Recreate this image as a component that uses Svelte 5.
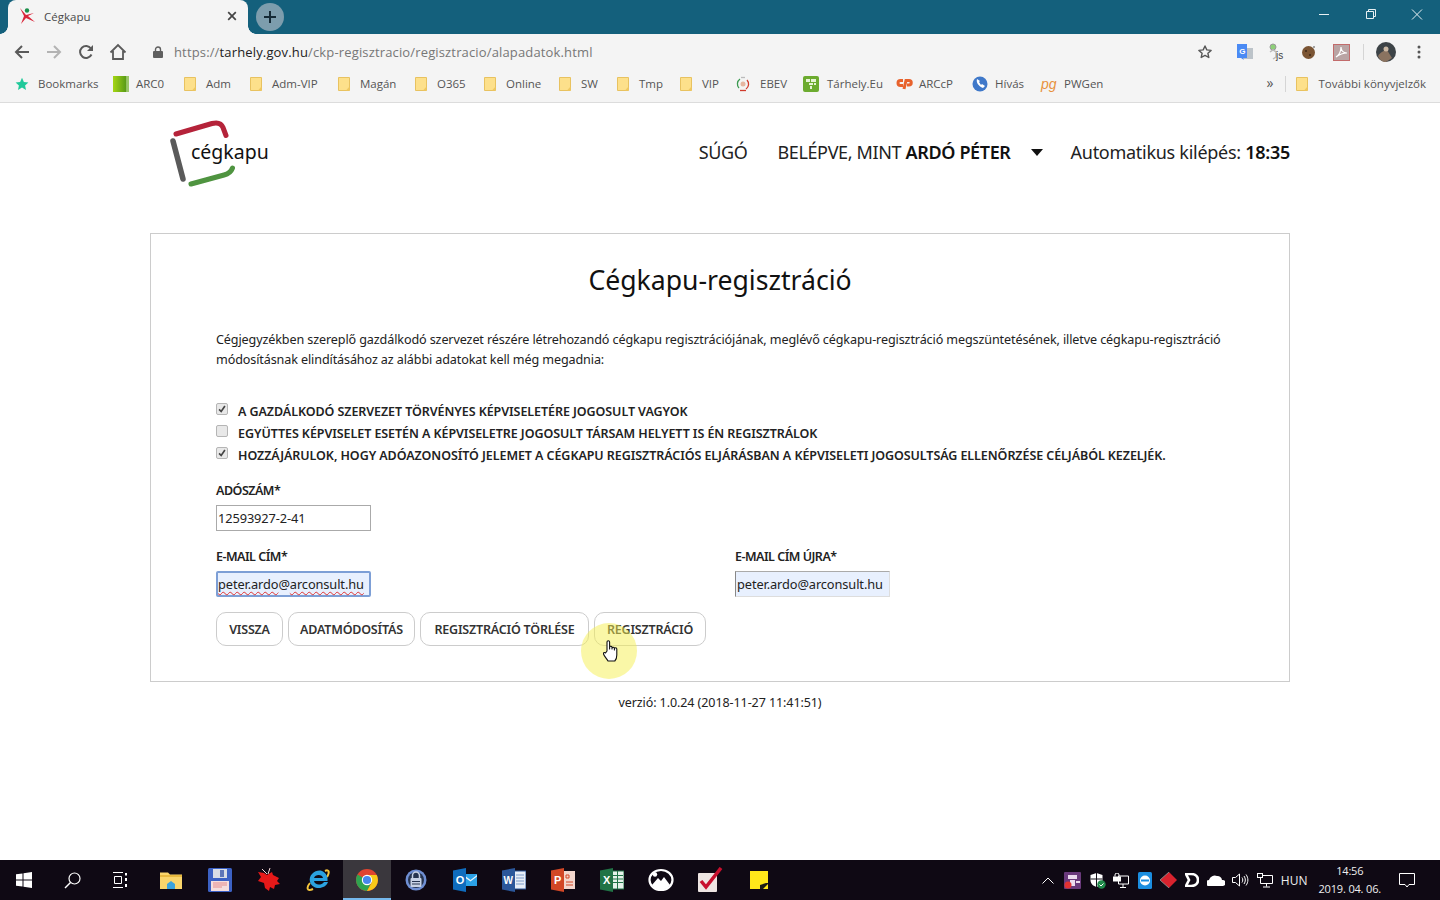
<script>
  const bookmarks = [
    { label: 'Bookmarks', w: 98, icon: 'star' },
    { label: 'ARC0', w: 71, icon: 'green' },
    { label: 'Adm', w: 66, icon: 'folder' },
    { label: 'Adm-VIP', w: 88, icon: 'folder' },
    { label: 'Magán', w: 77, icon: 'folder' },
    { label: 'O365', w: 69, icon: 'folder' },
    { label: 'Online', w: 75, icon: 'folder' },
    { label: 'SW', w: 58, icon: 'folder' },
    { label: 'Tmp', w: 63, icon: 'folder' },
    { label: 'VIP', w: 56, icon: 'folder' },
    { label: 'EBEV', w: 67, icon: 'ebev' },
    { label: 'Tárhely.Eu', w: 93, icon: 'tarhely' },
    { label: 'ARCcP', w: 76, icon: 'cp' },
    { label: 'Hívás', w: 69, icon: 'hivas' },
    { label: 'PWGen', w: 70, icon: 'pg' }
  ];
  const checks = [
    { text: 'A GAZDÁLKODÓ SZERVEZET TÖRVÉNYES KÉPVISELETÉRE JOGOSULT VAGYOK', on: true },
    { text: 'EGYÜTTES KÉPVISELET ESETÉN A KÉPVISELETRE JOGOSULT TÁRSAM HELYETT IS ÉN REGISZTRÁLOK', on: false },
    { text: 'HOZZÁJÁRULOK, HOGY ADÓAZONOSÍTÓ JELEMET A CÉGKAPU REGISZTRÁCIÓS ELJÁRÁSBAN A KÉPVISELETI JOGOSULTSÁG ELLENŐRZÉSE CÉLJÁBÓL KEZELJÉK.', on: true }
  ];
  const buttons = [
    { t: 'VISSZA', w: 67 },
    { t: 'ADATMÓDOSÍTÁS', w: 127 },
    { t: 'REGISZTRÁCIÓ TÖRLÉSE', w: 169 },
    { t: 'REGISZTRÁCIÓ', w: 112 }
  ];
</script>

{#snippet folder()}
  <svg width="12" height="14" viewBox="0 0 12 14"><path d="M.5.5h11v13H.5z" fill="#fde08b" stroke="#e8c260"/><path d="M8 13.5l3.5-4v4z" fill="#f0c860"/></svg>
{/snippet}

<div class="screen">
  <header class="tabstrip">
    <div class="tab">
      <svg class="favicon" width="18" height="18" viewBox="0 0 18 18">
        <circle cx="8" cy="3.5" r="2.2" fill="#1b8f4a"/>
        <path d="M1 1l4 8-3 8 5-6 9 4-7-6 6-3-8 2z" fill="#d9263a"/>
      </svg>
      <span class="tab-title">Cégkapu</span>
      <svg class="tab-close" width="10" height="10" viewBox="0 0 10 10"><path d="M1.2 1.2l7.6 7.6M8.800 1.200L1.200 8.800" stroke="#444" stroke-width="1.700"/></svg>
    </div>
    <div class="newtab">
      <svg width="14" height="14" viewBox="0 0 14 14"><path d="M7 1v12M1 7h12" stroke="#152a36" stroke-width="2"/></svg>
    </div>
    <div class="winctl">
      <svg width="46" height="30" viewBox="0 0 46 30"><path d="M18 14.500h10" stroke="#e8f0f3"/></svg>
      <svg width="46" height="30" viewBox="0 0 46 30"><path d="M18.500 11.500h7v7h-7zM20.500 11.500v-2h7v7h-2" fill="none" stroke="#e8f0f3"/></svg>
      <svg width="46" height="30" viewBox="0 0 46 30"><path d="M18 9.500l10 10M28 9.500l-10 10" stroke="#e8f0f3"/></svg>
    </div>
  </header>

  <div class="toolbar">
    <svg class="tool" width="16" height="16" viewBox="0 0 16 16"><path d="M15 8H2M8 2L2 8l6 6" fill="none" stroke="#5a5a5a" stroke-width="2"/></svg>
    <svg class="tool" width="16" height="16" viewBox="0 0 16 16"><path d="M1 8h13M8 2l6 6-6 6" fill="none" stroke="#b3b3b3" stroke-width="2"/></svg>
    <svg class="tool" width="16" height="16" viewBox="0 0 16 16"><path d="M13.500 10.500A6 6 0 1 1 13 4.500" fill="none" stroke="#5a5a5a" stroke-width="2"/><path d="M15 1v6H9z" fill="#5a5a5a"/></svg>
    <svg class="tool" width="18" height="18" viewBox="0 0 18 18"><path d="M1.500 9.500L9 2l7.500 7.500M4 8v8h10V8" fill="none" stroke="#5a5a5a" stroke-width="1.800"/></svg>
    <div class="omnibox">
      <svg width="10" height="12" viewBox="0 0 10 12"><rect y="5" width="10" height="7" rx="1" fill="#5f5f5f"/><path d="M2.500 5V3.500a2.500 2.500 0 0 1 5 0V5" fill="none" stroke="#5f5f5f" stroke-width="1.400"/></svg>
      <span class="url"><span class="dim">https://</span><span class="host">tarhely.gov.hu</span><span class="dim">/ckp-regisztracio/regisztracio/alapadatok.html</span></span>
    </div>
    <div class="exts">
      <svg width="14" height="14" viewBox="0 0 14 14"><path d="M7 1l1.800 3.900 4.300.5-3.200 2.900.9 4.200L7 10.400l-3.800 2.100.9-4.200L.9 5.400l4.300-.5z" fill="none" stroke="#555" stroke-width="1.400" stroke-linejoin="round"/></svg>
      <svg class="ext-g" width="18" height="18" viewBox="0 0 18 18"><rect x="6" y="5" width="11" height="11" fill="#bcc3c9"/><path d="M1 1h10v14H7l1 2-3-2H1z" fill="#4a8af4"/><text x="3.300" y="11" font-size="8" font-weight="700" fill="#fff" font-family="Liberation Sans">G</text></svg>
      <svg class="ext-js" width="20" height="18" viewBox="0 0 20 18"><circle cx="5" cy="4" r="3" fill="#8dcf78" stroke="#999"/><path d="M2 9l3-2 3 2v5l-3 2" fill="none" stroke="#bbb" stroke-width="1.500"/><text x="8" y="16" font-size="10" fill="#444" font-family="Liberation Sans">js</text></svg>
      <svg class="ext-c" width="16" height="16" viewBox="0 0 16 16"><circle cx="7.500" cy="8.500" r="6.500" fill="#7a5433"/><circle cx="5" cy="7" r="1" fill="#3c2717"/><circle cx="9" cy="11" r="1" fill="#3c2717"/><circle cx="13" cy="3" r="1" fill="#888"/></svg>
      <svg class="ext-p" width="17" height="17" viewBox="0 0 17 17"><rect x=".5" y=".5" width="16" height="16" fill="#b9a4a4" stroke="#c26b6b"/><path d="M3 13c3-2 5-6 5-10 0 4 3 6 6 6-4 0-7 1-11 4z" fill="none" stroke="#fff" stroke-width="1.200"/></svg>
      <span class="sep"></span>
      <svg class="avatar" width="20" height="20" viewBox="0 0 20 20"><circle cx="10" cy="10" r="10" fill="#3d4347"/><path d="M2 14c3-5 8-6 9-6l5 8-6 4c-4 0-6-2-8-6z" fill="#8a7360"/><circle cx="10" cy="7" r="2.500" fill="#ccb9a5"/></svg>
      <svg class="more" width="4" height="14" viewBox="0 0 4 14"><circle cx="2" cy="2" r="1.500" fill="#555"/><circle cx="2" cy="7" r="1.500" fill="#555"/><circle cx="2" cy="12" r="1.500" fill="#555"/></svg>
    </div>
  </div>

  <nav class="bookmarks">
    {#each bookmarks as b}
      <div class="bm" style="width:{b.w}px">
        <span class="bm-icon" class:tight={b.icon === 'folder'} class:wide={b.icon === 'ebev' || b.icon === 'tarhely'}>
          {#if b.icon === 'star'}
            <svg width="14" height="14" viewBox="0 0 14 14"><path d="M7 .8l1.900 4.100 4.500.5-3.300 3 .9 4.500L7 10.600l-4 2.300.9-4.500-3.300-3 4.500-.5z" fill="#1fc99a"/></svg>
          {:else if b.icon === 'green'}
            <svg width="16" height="16" viewBox="0 0 16 16"><defs><linearGradient id="gr" x1="0" x2="1"><stop offset="0" stop-color="#a5d613"/><stop offset=".8" stop-color="#5a9c16"/><stop offset=".85" stop-color="#9bc76a"/></linearGradient></defs><rect width="16" height="16" fill="url(#gr)"/></svg>
          {:else if b.icon === 'folder'}
            {@render folder()}
          {:else if b.icon === 'ebev'}
            <svg width="14" height="16" viewBox="0 0 14 16"><path d="M3 12a6 6 0 0 1 1-9" fill="none" stroke="#3a9a50" stroke-width="1.300"/><path d="M11 4a6 6 0 0 1-1 9" fill="none" stroke="#d03a2c" stroke-width="1.300"/><circle cx="7" cy="8" r="2.500" fill="#e6b5a0"/><path d="M4 14.500h6" stroke="#d03a2c" stroke-width="1.300"/><path d="M5 1.500h4" stroke="#bbb" stroke-width="1.300"/></svg>
          {:else if b.icon === 'tarhely'}
            <svg width="16" height="16" viewBox="0 0 16 16"><rect width="16" height="16" rx="2" fill="#6cab2f"/><path d="M3 3h4v3H3zM8 3h5v3H8zM6 7h4v2H6zM7 10h2v3H7zM11 7h2v2h-2z" fill="#e6f3d5"/></svg>
          {:else if b.icon === 'cp'}
            <svg width="17" height="13" viewBox="0 0 17 13"><path d="M7 3.500H4.500a2.500 2.500 0 0 0 0 5H7" fill="none" stroke="#e8622c" stroke-width="3"/><path d="M8 12l2-8.500h3a2.200 2.200 0 0 1 0 4.500h-2" fill="none" stroke="#e8622c" stroke-width="3"/></svg>
          {:else if b.icon === 'hivas'}
            <svg width="16" height="16" viewBox="0 0 16 16"><circle cx="8" cy="8" r="7.500" fill="#3f78c9"/><path d="M5 3c-1 3 1 7 6 9l2-2-3-2-1 1-2-3 1-1z" fill="#fff"/></svg>
          {:else}
            <span class="pg">pg</span>
          {/if}
        </span>
        <span>{b.label}</span>
      </div>
    {/each}
    <div class="bm-right">
      <span class="chev">»</span>
      <span class="sep2"></span>
      {@render folder()}
      <span>További könyvjelzők</span>
    </div>
  </nav>

  <main class="page">
    <div class="topbar">
      <div class="logo">
        <svg width="70" height="70" viewBox="0 0 70 70">
          <path d="M8 16L44 5.500c5-1.300 9-1 11 4l3 8" fill="none" stroke="#b5233a" stroke-width="5" stroke-linecap="round"/>
          <path d="M5 23l10 38" fill="none" stroke="#5a5a5a" stroke-width="5.500" stroke-linecap="round"/>
          <path d="M23 66l33-9c4-1 7-3 8.500-7" fill="none" stroke="#4f9440" stroke-width="5" stroke-linecap="round"/>
        </svg>
        <span class="logo-text">cégkapu</span>
      </div>
      <div class="menu">
        <span class="m-help">SÚGÓ</span>
        <span class="m-user">BELÉPVE, MINT <b>ARDÓ PÉTER</b></span>
        <span class="caret"></span>
        <span class="m-time">Automatikus kilépés: <b>18:35</b></span>
      </div>
    </div>

    <section class="card">
      <h1>Cégkapu-regisztráció</h1>
      <p>Cégjegyzékben szereplő gazdálkodó szervezet részére létrehozandó cégkapu regisztrációjának, meglévő cégkapu-regisztráció megszüntetésének, illetve cégkapu-regisztráció módosításnak elindításához az alábbi adatokat kell még megadnia:</p>

      <div class="checks">
        {#each checks as c}
          <label class="check">
            <span class="box">
              {#if c.on}
                <svg width="12" height="12" viewBox="0 0 12 12"><path d="M2.500 6.500l2.500 2.500 4.500-6.500" fill="none" stroke="#444" stroke-width="2"/></svg>
              {/if}
            </span>
            <span>{c.text}</span>
          </label>
        {/each}
      </div>

      <div class="field tax">
        <span class="lab">ADÓSZÁM*</span>
        <div class="input plain">12593927-2-41</div>
      </div>

      <div class="emails">
        <div class="field">
          <span class="lab">E-MAIL CÍM*</span>
          <div class="input focus"><span class="sq">peter.ardo</span>@<span class="sq">arconsult.hu</span></div>
        </div>
        <div class="field">
          <span class="lab">E-MAIL CÍM ÚJRA*</span>
          <div class="input auto">peter.ardo@arconsult.hu</div>
        </div>
      </div>

      <div class="buttons">
        {#each buttons as b}
          <span class="btn" style="width:{b.w}px">{b.t}</span>
        {/each}
      </div>

      <div class="halo"></div>
      <svg class="hand" width="16" height="24" viewBox="0 0 16 24">
        <path d="M4 12V3a1.300 1.300 0 0 1 2.600 0v7-2a1.300 1.300 0 0 1 2.400 0v2-1a1.300 1.300 0 0 1 2.400 0v2-1a1.200 1.200 0 0 1 2.400 0v6c0 3-1 5-2 6H5c-1-2-4-5-4.500-7-.2-1.500 1-2 2-1z" fill="#fff" stroke="#111" stroke-width="1.100" stroke-linejoin="round"/>
      </svg>
    </section>

    <div class="version">verzió: 1.0.24 (2018-11-27 11:41:51)</div>
  </main>

  <footer class="taskbar">
    <div class="tb-apps">
      <span class="tb s">
        <svg width="16" height="16" viewBox="0 0 16 16"><path d="M0 2.300L6.500 1.400v6.200H0zM7.500 1.300L16 0v7.600H7.500zM0 8.400h6.500v6.200L0 13.700zM7.500 8.400H16V16l-8.500-1.300z" fill="#fff"/></svg>
      </span>
      <span class="tb s">
        <svg width="17" height="17" viewBox="0 0 17 17"><circle cx="10.500" cy="6.500" r="5.500" fill="none" stroke="#fff" stroke-width="1.200"/><path d="M6.500 10.500L1 16" stroke="#fff" stroke-width="1.400"/></svg>
      </span>
      <span class="tb s">
        <svg width="16" height="16" viewBox="0 0 16 16"><path d="M1 .5h10M1 15.500h10M2.500 4.500h7v7h-7z" fill="none" stroke="#fff"/><path d="M13 1h2v2.500h-2zM13 6h2v3h-2zM13 12h2v3h-2z" fill="#fff"/></svg>
      </span>
      <span class="tb gapl">
        <svg width="22" height="18" viewBox="0 0 22 18"><path d="M0 1.500h8l2 2h12V18H0z" fill="#f9d56b"/><path d="M0 4h22v2H0z" fill="#e8b93f"/><path d="M7 18v-5l4-3 4 3v5z" fill="#3aa3dd"/></svg>
      </span>
      <span class="tb">
        <svg width="24" height="24" viewBox="0 0 24 24"><rect width="24" height="24" rx="1.500" fill="#3c61c4"/><rect x="3" y="13" width="18" height="10" fill="#f5dede"/><path d="M5 15h14M5 17h14M5 19h9" stroke="#e58b8b"/><rect x="5" y="1" width="14" height="9" fill="#d9dde6"/><rect x="12" y="2" width="4" height="7" fill="#5f76b8"/></svg>
      </span>
      <span class="tb">
        <svg width="26" height="26" viewBox="0 0 26 26"><path d="M2 5l6 1 3 2 5-3 1 3 6 3-2 3 3 3-5 1-1 4-4-2-1 4-4-3-1-5-6-2 3-4z" fill="#e61919"/><path d="M6 2l5 5M14 1l-2 6" stroke="#f2d7d7"/></svg>
      </span>
      <span class="tb">
        <svg width="26" height="26" viewBox="0 0 26 26"><path d="M20 4c4-2 5 1 2 6M5 16C1 21 2 25 8 22" fill="none" stroke="#f5c53c" stroke-width="2"/><path d="M20.500 14H9c.5 4 7 5 10 1h4c-2 7-15 9-18 0C3 7 12 2 17 4c4 2 6 5 5.500 10zM9 11h9c-.5-4-8-4-9 0z" fill="#2ba2e0" fill-rule="evenodd"/></svg>
      </span>
      <span class="tb active">
        <svg width="22" height="22" viewBox="0 0 22 22"><circle cx="11" cy="11" r="11" fill="#e0432f"/><path d="M11 11L1.500 5.500A11 11 0 0 0 11 22l5-10z" fill="#2fa34f"/><path d="M11 6h9.700A11 11 0 0 1 11 22l5-9z" fill="#f9c918"/><circle cx="11" cy="11" r="5.200" fill="#fff"/><circle cx="11" cy="11" r="4.100" fill="#4787ed"/></svg>
      </span>
      <span class="tb">
        <svg width="22" height="22" viewBox="0 0 22 22"><circle cx="11" cy="11" r="10.500" fill="#6f8fd3"/><circle cx="11" cy="11" r="8" fill="#26344f"/><rect x="5.500" y="9" width="11" height="9" rx="1" fill="#c8d2e5"/><path d="M7.500 9V6.500a3.500 3.500 0 0 1 7 0V9" fill="none" stroke="#c8d2e5" stroke-width="1.500"/><rect x="7" y="12" width="8" height="1" fill="#26344f"/><rect x="7" y="14.500" width="8" height="1" fill="#26344f"/></svg>
      </span>
      <span class="tb">
        <svg width="24" height="24" viewBox="0 0 24 24"><rect x="11" y="6" width="13" height="12" fill="#2ba1e6"/><path d="M11 7l6.500 5L24 7v1.500l-6.500 5L11 9z" fill="#e9f5fc"/><path d="M0 2.500L13 0v24L0 21.500z" fill="#0f6cbd"/><text x="2.700" y="16" font-size="11" font-weight="700" fill="#fff" font-family="Liberation Sans">O</text></svg>
      </span>
      <span class="tb">
        <svg width="24" height="24" viewBox="0 0 24 24"><rect x="10" y="3" width="14" height="18" fill="#e8eef7" stroke="#2b579a"/><path d="M14 7h8M14 10h8M14 13h8M14 16h8" stroke="#7d9cc9"/><path d="M0 2.500L13 0v24L0 21.500z" fill="#2b579a"/><text x="1.500" y="16" font-size="10" font-weight="700" fill="#fff" font-family="Liberation Sans">W</text></svg>
      </span>
      <span class="tb">
        <svg width="24" height="24" viewBox="0 0 24 24"><rect x="11" y="3" width="13" height="18" fill="#f3d6cd"/><path d="M15 7h3v3h-3zM15 14h7M15 17h7" stroke="#d24726" fill="none"/><path d="M0 2.500L13 0v24L0 21.500z" fill="#d24726"/><text x="3" y="16" font-size="11" font-weight="700" fill="#fff" font-family="Liberation Sans">P</text></svg>
      </span>
      <span class="tb">
        <svg width="24" height="24" viewBox="0 0 24 24"><rect x="11" y="3" width="13" height="18" fill="#e6f2ea" stroke="#217346"/><path d="M13 7.500h10M13 11h10M13 14.500h10M17.500 3v18" stroke="#217346" fill="none"/><path d="M0 2.500L13 0v24L0 21.500z" fill="#217346"/><text x="3" y="16" font-size="11" font-weight="700" fill="#fff" font-family="Liberation Sans">X</text></svg>
      </span>
      <span class="tb">
        <svg width="26" height="24" viewBox="0 0 26 24"><ellipse cx="13" cy="12" rx="11.500" ry="10" fill="none" stroke="#fff" stroke-width="2.200"/><path d="M4 17l6-7 3 3 3-4 6 8c-2 3-5 4.500-9 4.500S6 20 4 17z" fill="#fff"/><circle cx="7" cy="6.500" r="2.200" fill="#fff"/></svg>
      </span>
      <span class="tb">
        <svg width="26" height="26" viewBox="0 0 26 26"><rect x="1" y="6" width="19" height="19" rx="1" fill="#eee5e2"/><path d="M4 14l5 6L24 1" fill="none" stroke="#c8102e" stroke-width="3.500"/></svg>
      </span>
      <span class="tb">
        <svg width="18" height="18" viewBox="0 0 18 18"><rect width="18" height="18" fill="#ffe81a"/><path d="M10 18v-4l6-2 2 0v1l-5 5z" fill="#1c1c14"/></svg>
      </span>
    </div>

    <div class="tray">
      <svg class="t1" width="12" height="7" viewBox="0 0 12 7"><path d="M.5 6.500L6 1l5.500 5.500" fill="none" stroke="#fff"/></svg>
      <svg class="t2" width="17" height="17" viewBox="0 0 17 17"><rect width="17" height="17" rx="1" fill="#6a3a7c"/><path d="M4 3h9v4H4zM6 8h5v6H6zM12 9h4v2h-4z" fill="#ecdcef"/><circle cx="4" cy="13" r="3.500" fill="#e23232"/></svg>
      <svg class="t3" width="17" height="17" viewBox="0 0 17 17"><path d="M7.500 1l6 2v5c0 4-3 6-6 7-3-1-6-3-6-7V3z" fill="#fff"/><path d="M7.500 1v14M1.500 7h12" stroke="#14101a"/><circle cx="12.500" cy="12.500" r="4.200" fill="#1f8a4a"/><path d="M10.500 12.500l1.500 1.500 2.500-2.500" fill="none" stroke="#fff"/></svg>
      <svg class="t4" width="16" height="15" viewBox="0 0 16 15"><path d="M5.500 3h10v8h-10zM10 11v3M7 14.500h6" fill="none" stroke="#fff"/><rect y="3.500" width="8" height="5" fill="#fff"/><path d="M2 3.500V2a2 2 0 0 1 4 0v1.500" fill="none" stroke="#fff"/></svg>
      <svg class="t5" width="14" height="17" viewBox="0 0 14 17"><rect width="14" height="17" rx="1.500" fill="#1b8ee0"/><ellipse cx="7" cy="8.500" rx="5" ry="5" fill="#fff"/><path d="M3 8.500h8" stroke="#1b8ee0" stroke-width="2"/></svg>
      <svg class="t6" width="20" height="16" viewBox="0 0 20 16"><path d="M10 0l8 8-8 8-9-8z" fill="#d8232e"/><path d="M1 8l9-8" stroke="#888"/><path d="M1 8l9 8" stroke="#888"/></svg>
      <svg class="t7" width="14" height="14" viewBox="0 0 14 14"><path d="M1 1h5c5 0 7 3 7 6s-2 6-7 6H1l3-6z" fill="none" stroke="#fff" stroke-width="2.600"/></svg>
      <svg class="t8" width="18" height="12" viewBox="0 0 18 12"><path d="M2 12a3 3 0 0 1 0-6 6 6 0 0 1 8-4 4.500 4.500 0 0 1 5 4 3 3 0 0 1 1 6z" fill="#fff"/></svg>
      <svg class="t9" width="17" height="14" viewBox="0 0 17 14"><path d="M.5 4.500h3L7.500 1v12l-4-3.500h-3z" fill="none" stroke="#fff"/><path d="M10 4.500c1 1.500 1 3.500 0 5M12 3c1.800 2.500 1.800 5.500 0 8M14 1.500c2.500 3.500 2.500 7.500 0 11" fill="none" stroke="#fff"/></svg>
      <svg class="t10" width="16" height="15" viewBox="0 0 16 15"><path d="M3.500 2.500h12v8h-12zM9.500 10.500v3M6 14h7" fill="none" stroke="#fff"/><rect x=".5" y=".5" width="5" height="4" fill="#14101a" stroke="#fff"/></svg>
      <span class="hun">HUN</span>
      <span class="clock"><span>14:56</span><span>2019. 04. 06.</span></span>
      <svg class="notif" width="16" height="15" viewBox="0 0 16 15"><path d="M.5.500h15v11H10l-2 2.500-2-2.500H.5z" fill="none" stroke="#fff"/></svg>
    </div>
  </footer>
</div>

<style>
  :global(body) { margin: 0; background: #fff; }
  .screen {
    width: 1440px; height: 900px; overflow: hidden;
    display: flex; flex-direction: column;
    font-family: "Open Sans", "Noto Sans", sans-serif;
  }

  /* browser chrome */
  .tabstrip { height: 34px; background: #14607c; display: flex; align-items: flex-end; flex: none; }
  .tab {
    width: 240px; height: 34px; margin-left: 8px; background: #f4f4f4; position: relative;
    border-radius: 8px 8px 0 0; display: flex; align-items: center; box-sizing: border-box; padding: 0 11px 2px 11px;
    font-size: 11.500px; color: #444;
  }
  .tab::before, .tab::after { content: ""; position: absolute; bottom: 0; width: 8px; height: 8px; }
  .tab::before { left: -8px; background: radial-gradient(circle at 0 0, transparent 7.500px, #f4f4f4 8px); }
  .tab::after { right: -8px; background: radial-gradient(circle at 100% 0, transparent 7.500px, #f4f4f4 8px); }
  .favicon { flex: none; }
  .tab-title { margin-left: 7px; flex: 1; color: #4a4a4a; }
  .tab-close { flex: none; }
  .newtab {
    width: 28px; height: 28px; border-radius: 50%; background: #7d9dad;
    margin: 0 0 3px 8px; display: flex; align-items: center; justify-content: center;
  }
  .winctl { margin-left: auto; height: 34px; display: flex; align-items: flex-start; }
  .winctl svg { display: block; }
  .winctl svg:first-child { margin-right: 1px; }

  .toolbar { height: 34px; box-sizing: border-box; padding: 2px 0 0 14px; background: #f4f4f4; display: flex; align-items: center; flex: none; }
  .tool { flex: none; margin-right: 16px; }
  .tool:nth-child(3) { margin-right: 15px; }
  .omnibox { display: flex; align-items: center; margin-left: 10px; flex: 1; }
  .url { margin-left: 11px; font-size: 13px; letter-spacing: .15px; }
  .dim { color: #777; }
  .host { color: #222; }
  .exts { display: flex; align-items: center; padding-right: 19px; }
  .ext-g { margin-left: 24px; }
  .ext-js { margin-left: 14px; }
  .ext-c { margin-left: 13px; }
  .ext-p { margin-left: 16px; }
  .sep { width: 1px; height: 16px; background: #d5d5d5; margin: 0 12px 0 13px; }
  .more { margin-left: 21px; }

  .bookmarks {
    height: 35px; box-sizing: border-box; padding: 0 0 3px 15px; background: #f4f4f4; border-bottom: 1px solid #dcdcdc; flex: none;
    display: flex; align-items: center; font-size: 11.500px; color: #555;
  }
  .bm { display: flex; align-items: center; flex: none; white-space: nowrap; }
  .bm-icon { width: 23px; display: flex; align-items: center; flex: none; }
  .bm-icon.tight { width: 22px; }
  .bm-icon.wide { width: 24px; }
  .pg { font: italic 400 14px "Liberation Sans", sans-serif; color: #e8913c; line-height: 1; }
  .bm-right { margin-left: auto; display: flex; align-items: center; gap: 10px; padding-right: 14px; white-space: nowrap; }
  .chev { font-size: 14px; color: #555; margin: -2px 1px 0 0; }
  .sep2 { width: 1px; height: 16px; background: #d5d5d5; }
  .bm-right span:last-child { margin-left: 1px; }

  /* page */
  .page { flex: 1; min-height: 0; background: #fff; color: #111; font-family: "Noto Sans", "Open Sans", sans-serif; }
  .topbar { width: 1140px; margin: 0 auto; height: 130px; display: flex; justify-content: space-between; align-items: center; box-sizing: border-box; padding: 0 0 30px 18px; }
  .logo { display: flex; align-items: center; position: relative; height: 70px; }
  .logo svg { display: block; }
  .logo-text { font-size: 19.500px; margin-left: -47px; margin-top: -3px; color: #111; }
  .menu { display: flex; align-items: center; font-size: 18px; color: #222; letter-spacing: -.36px; margin-top: -2px; }
  .m-help { margin-right: 30px; }
  .m-time { letter-spacing: -.28px; }
  .m-user b, .m-time b { font-weight: 600; color: #111; }
  .caret { width: 0; height: 0; border-left: 6.500px solid transparent; border-right: 6.500px solid transparent; border-top: 7px solid #111; margin: 0 28px 0 20px; }

  .card {
    width: 1140px; height: 449px; margin: 0 auto; box-sizing: border-box;
    border: 1px solid #ccc; padding: 26px 65px 0; position: relative;
  }
  h1 { margin: 0; text-align: center; font-size: 26.600px; font-weight: 400; line-height: 40px; color: #111; }
  p { margin: 30px -4px 0 0; font-size: 12.600px; line-height: 20px; color: #222; letter-spacing: -.12px; }
  .checks { margin-top: 30px; display: flex; flex-direction: column; }
  .check { height: 22px; display: flex; align-items: center; font-size: 12.500px; font-weight: 600; color: #222; letter-spacing: -.07px; white-space: nowrap; }
  .box {
    width: 12px; height: 12px; box-sizing: border-box; border: 1px solid #b5b5b5; border-radius: 2px; background: #e8e8e8;
    margin-right: 10px; margin-top: -5px; display: flex; align-items: center; justify-content: center; flex: none;
  }
  .field { display: flex; flex-direction: column; }
  .tax { margin-top: 14px; }
  .lab { font-size: 12.500px; font-weight: 600; color: #222; line-height: 22px; letter-spacing: -.5px; }
  .input { box-sizing: border-box; width: 155px; height: 26px; margin-top: 3px; padding: 0 1px; font-size: 12.800px; line-height: 24px; color: #222; letter-spacing: -.1px; white-space: nowrap; }
  .plain { border: 1px solid #aaa; }
  .focus { background: #e8f0fe; border: 2px solid #7d9fd6; padding: 0; border-radius: 2px; line-height: 22px; }
  .auto { background: #e8f0fe; border: 1px solid #ddd; border-left-color: #888; border-top-color: #aaa; }
  .sq { text-decoration: underline wavy #d33; text-decoration-thickness: 1px; text-underline-offset: 2px; text-decoration-skip-ink: none; }
  .emails { display: flex; margin-top: 15px; }
  .emails .field { flex: none; width: 519px; }
  .buttons { display: flex; gap: 5px; margin-top: 15px; }
  .btn {
    height: 34px; box-sizing: border-box; border: 1px solid #ccc; border-radius: 10px; flex: none;
    display: flex; align-items: center; justify-content: center; font-size: 12.500px; font-weight: 600; color: #333; letter-spacing: -.2px; white-space: nowrap;
  }
  .halo { position: absolute; left: 430px; top: 389px; width: 56px; height: 56px; border-radius: 50%; background: rgba(245, 240, 80, .5); }
  .hand { position: absolute; left: 452px; top: 405px; }
  .version { text-align: center; font-size: 12.500px; line-height: 20px; margin-top: 11px; color: #222; letter-spacing: -.08px; }

  /* taskbar */
  .taskbar { height: 40px; background: #0f0914; display: flex; justify-content: space-between; flex: none; color: #eee; font-size: 12px; }
  .tb-apps { display: flex; }
  .tb { width: 48px; height: 40px; display: flex; align-items: center; justify-content: center; flex: none; box-sizing: border-box; }
  .tb:not(.s) { width: 49px; }
  .gapl { margin-left: 2px; }
  .active { background: #3a373d; border-bottom: 2px solid #76b9ed; width: 48px !important; padding-top: 2px; margin: 0 .5px; }
  .tray { display: flex; align-items: center; padding-right: 25px; }
  .t1 { margin-right: 10px; }
  .t2 { margin-right: 8px; }
  .t3 { margin-right: 7px; }
  .t4 { margin-right: 9px; }
  .t5 { margin-right: 7px; }
  .t6 { margin-right: 6px; }
  .t7 { margin-right: 8px; }
  .t8 { margin-right: 7px; }
  .t9 { margin-right: 8px; }
  .t10 { margin-right: 8px; }
  .hun { margin-right: 11px; }
  .clock { display: flex; flex-direction: column; align-items: center; line-height: 18px; margin-right: 18px; font-size: 11px; letter-spacing: -.17px; }
</style>
